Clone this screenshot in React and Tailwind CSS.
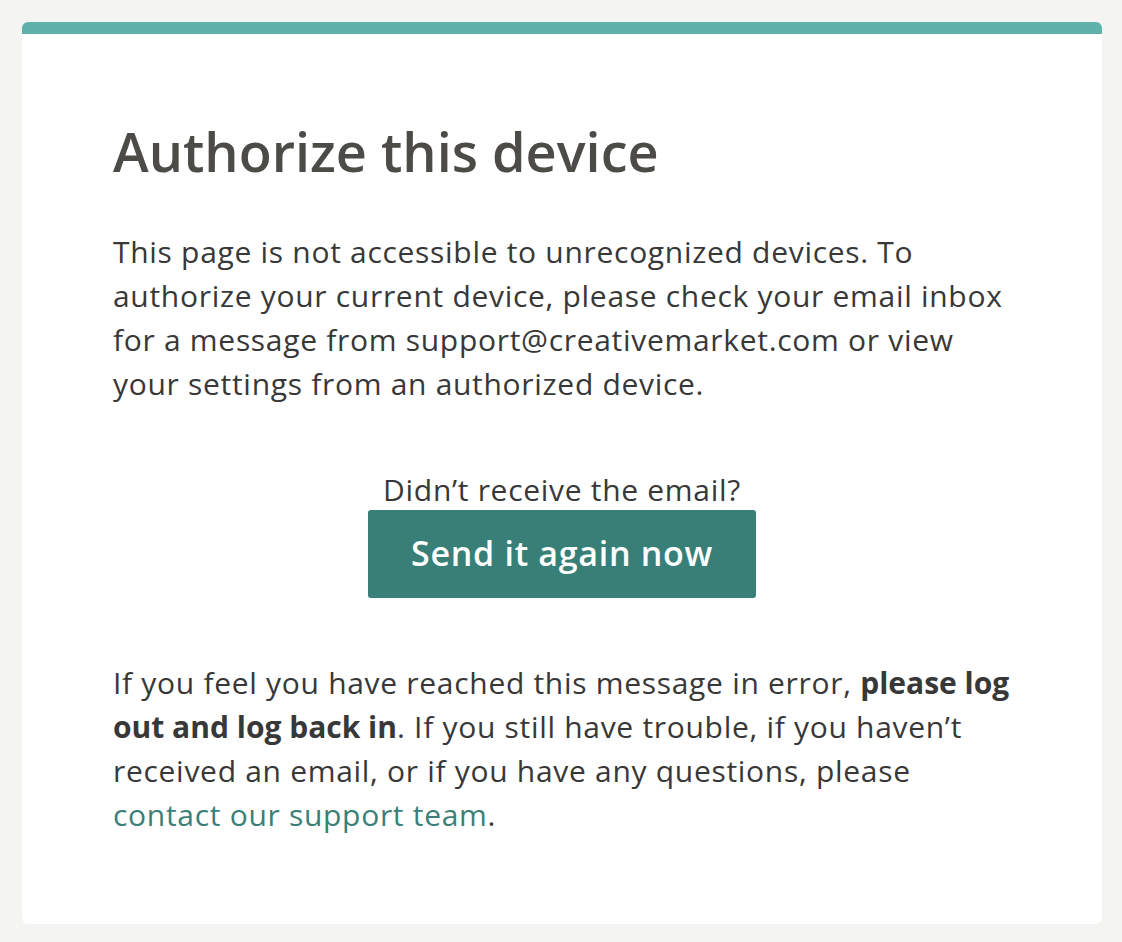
export default function App() {
  return (
    <div className="min-h-[942px] bg-[#f4f4f2] pt-[22px] pl-[22px] pr-[20px] font-['Open_Sans','Noto_Sans',sans-serif]">
      <div className="h-[902px] overflow-hidden rounded-md bg-white">
        <div className="h-3 bg-[#5eb2a9]" />
        <div className="pl-[91px] pr-[60px] pt-[85px]">
          <h1 className="text-[54px] leading-[1.2] font-semibold text-[#4c4b47]">
            Authorize this device
          </h1>
          <p className="mt-[46px] whitespace-nowrap text-[30px] leading-[44px] tracking-[0.7px] text-[#383838]">
            This page is not accessible to unrecognized devices. To
            <br />
            authorize your current device, please check your email inbox
            <br />
            for a message from support@creativemarket.com or view
            <br />
            your settings from an authorized device.
          </p>
          <div className="mt-[66px] mr-[31px] flex flex-col items-center">
            <p className="text-[30px] leading-[36px] tracking-[0.7px] text-[#383838]">
              Didn’t receive the email?
            </p>
            <button className="mt-[2px] h-[88px] w-[388px] rounded-[3px] bg-[#387f78] text-[34px] font-semibold tracking-[0.7px] text-white">
              Send it again now
            </button>
          </div>
          <p className="mt-[63px] whitespace-nowrap text-[30px] leading-[44px] tracking-[0.7px] text-[#383838]">
            If you feel you have reached this message in error,{' '}
            <strong className="font-bold tracking-[0px]">
              please log
              <br />
              out and log back in
            </strong>
            . If you still have trouble, if you haven’t
            <br />
            received an email, or if you have any questions, please
            <br />
            <a href="#" className="text-[#3a8078]">contact our support team</a>.
          </p>
        </div>
      </div>
    </div>
  );
}
